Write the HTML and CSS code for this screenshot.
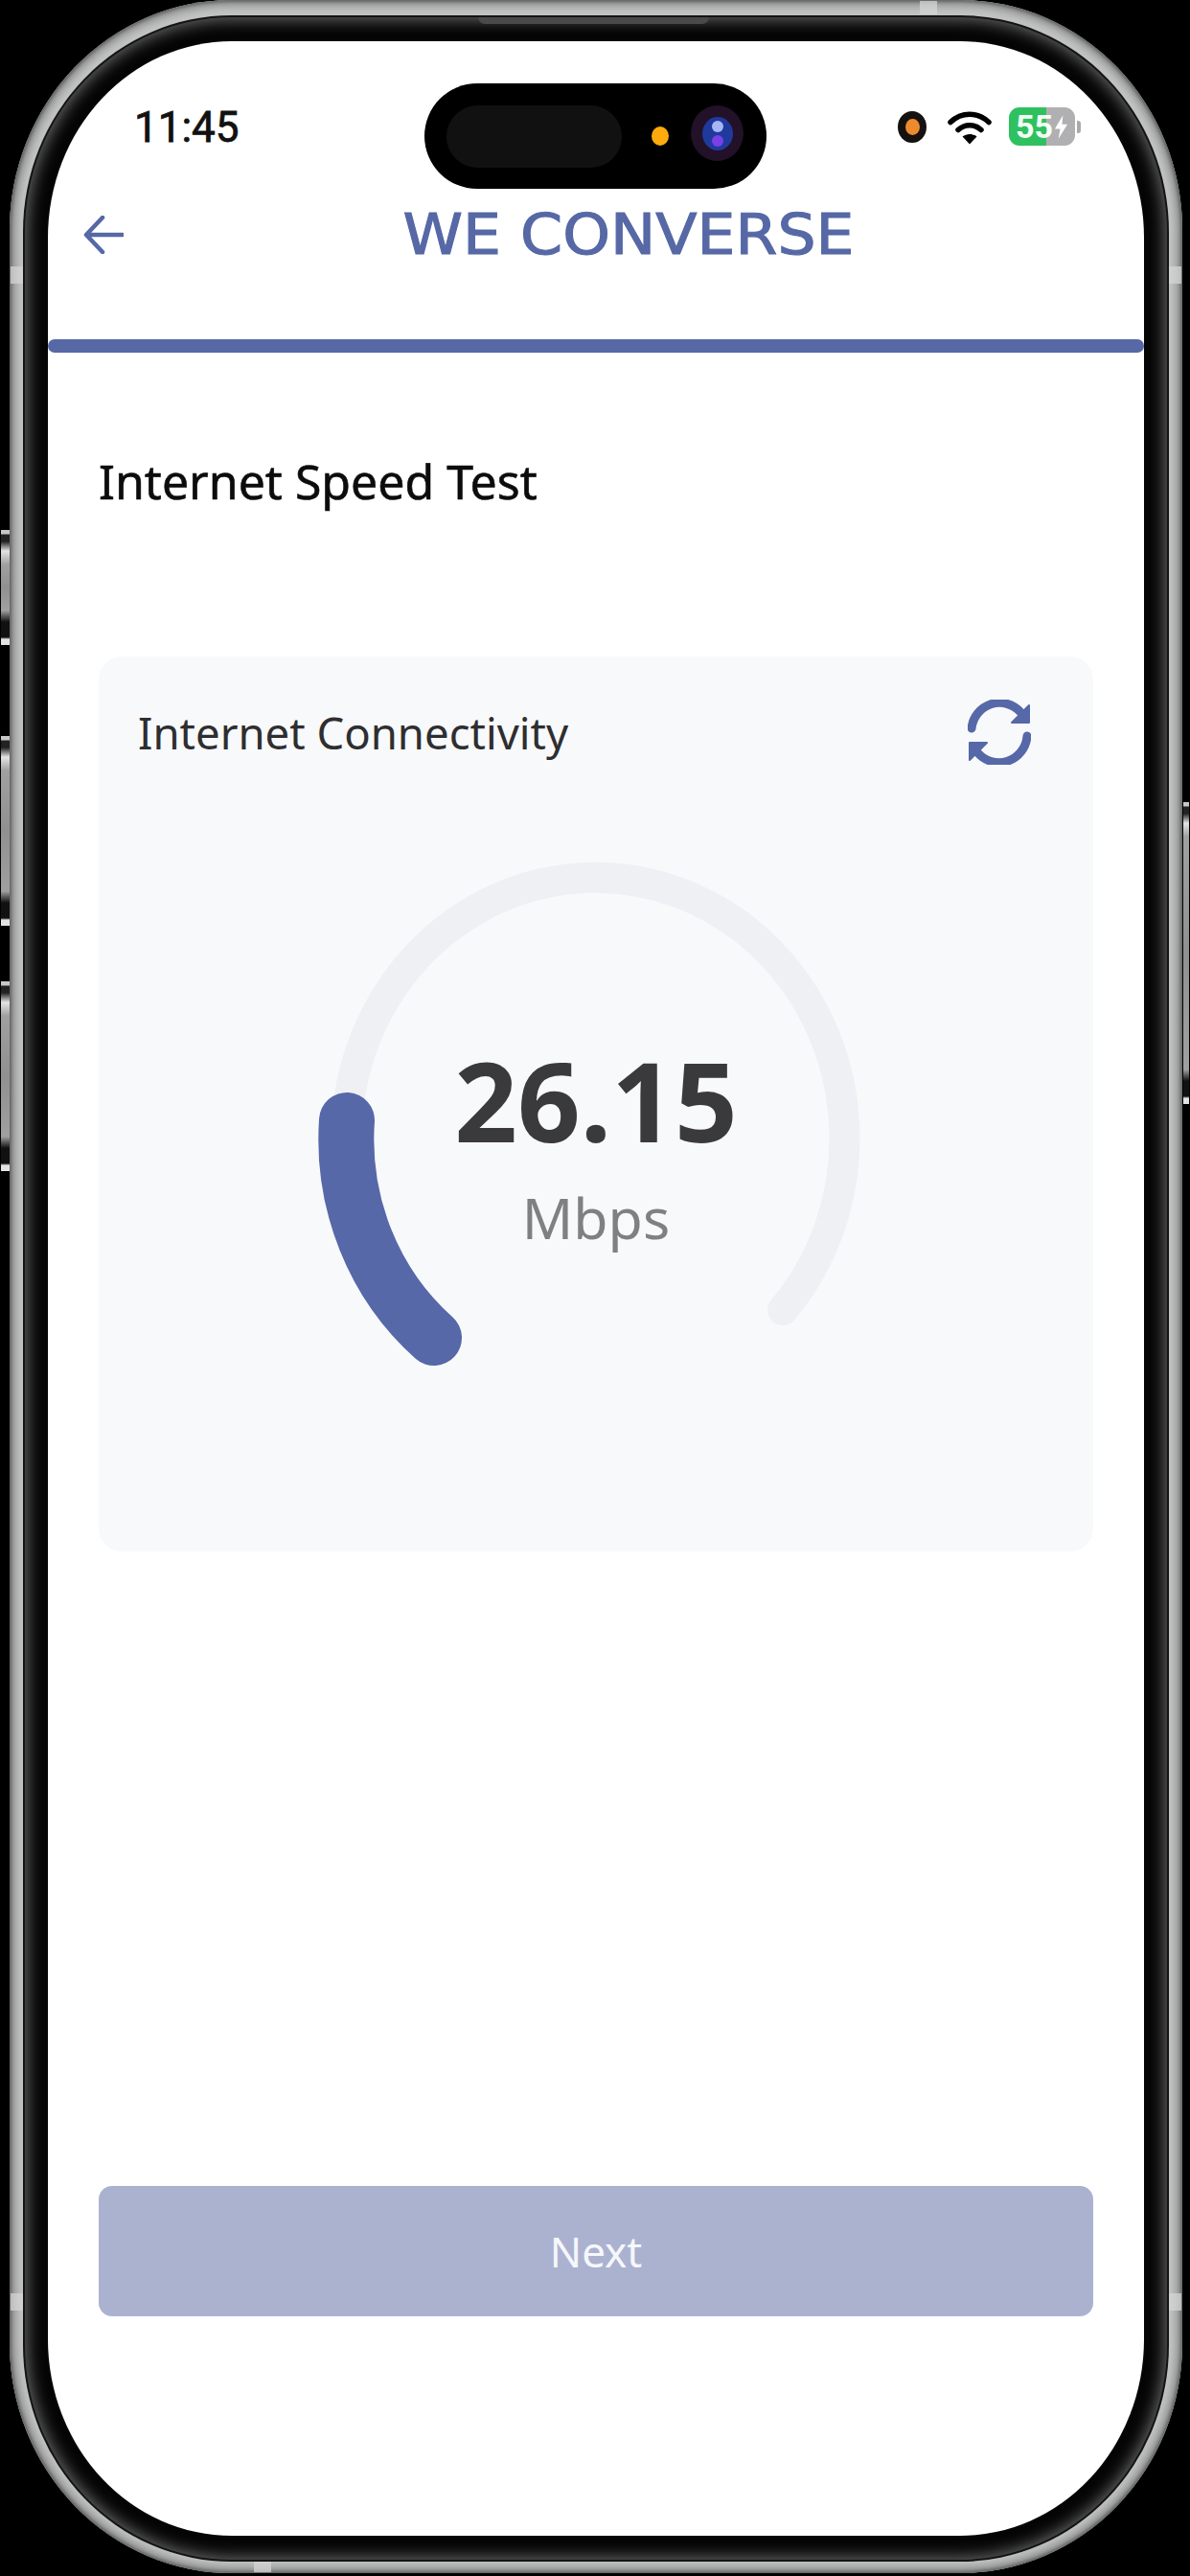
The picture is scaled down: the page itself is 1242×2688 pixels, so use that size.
FILE: index.html
```html
<!DOCTYPE html>
<html lang="en">
<head>
<meta charset="utf-8">
<title>We Converse - Internet Speed Test</title>
<link rel="stylesheet" href="styles.css">
</head>
<body>
<div class="stage">
  <span class="side-btn btn-a"></span>
  <span class="side-btn btn-b"></span>
  <span class="side-btn btn-c"></span>
  <span class="side-btn btn-d"></span>
  <div class="metal">
    <span class="band band-lt"></span>
    <span class="band band-lb"></span>
    <span class="band band-rt"></span>
    <span class="band band-rb"></span>
    <span class="band band-t"></span>
    <span class="band band-b"></span>
    <span class="slit"></span>
    <div class="hairline">
      <div class="bezel">
        <main class="screen">
          <div class="island">
            <span class="island-pill"></span>
            <span class="island-dot"></span>
            <span class="camera"><span class="lens"><span class="lens-top"></span><span class="lens-bottom"></span></span></span>
          </div>

          <div class="status">
            <span class="time">11:45</span>
            <div class="status-right">
              <span class="rec"><span class="rec-core"></span></span>
              <svg class="wifi" viewBox="0 0 46 37" aria-hidden="true">
                <path d="M3 13.500C14.500 2.500 31.500 2.500 43 13.500" fill="none" stroke="#000" stroke-width="5.500" stroke-linecap="round"/>
                <path d="M11 21.500C18 15 28 15 35 21.500" fill="none" stroke="#000" stroke-width="5.500" stroke-linecap="round"/>
                <path d="M15.500 28.500C20 25 26 25 30.500 28.500L23 36.500Z" fill="#000"/>
              </svg>
              <div class="battery">
                <span class="battery-num">55</span>
                <svg class="bolt" viewBox="0 0 16 26" aria-hidden="true"><path d="M10 0L1 15H7L5 26L15 10H9Z" fill="#fff"/></svg>
              </div>
              <span class="battery-nub"></span>
            </div>
          </div>

          <header class="nav">
            <svg class="back" viewBox="0 0 42 40" aria-hidden="true">
              <path d="M41 20H3M20 2L3 20L20 38" fill="none" stroke="#5668a5" stroke-width="4.500" stroke-linecap="round" stroke-linejoin="round"/>
            </svg>
            <span class="logo">WE CONVERSE</span>
          </header>
          <div class="rule"></div>

          <h1 class="page-title">Internet Speed Test</h1>

          <section class="card">
            <div class="card-head">
              <h2 class="card-title">Internet Connectivity</h2>
              <svg class="refresh" viewBox="0 0 66 68" aria-hidden="true">
                <path d="M4 30A29.500 30 0 0 1 55 13" fill="none" stroke="#5668a8" stroke-width="9" stroke-linecap="round"/>
                <path d="M64 6V24H46Z" fill="#5668a8" stroke="#5668a8" stroke-width="2" stroke-linejoin="round"/>
                <path d="M62 38A29.500 30 0 0 1 10 55" fill="none" stroke="#5668a8" stroke-width="9" stroke-linecap="round"/>
                <path d="M2 45H20L2 63Z" fill="#5668a8" stroke="#5668a8" stroke-width="2" stroke-linejoin="round"/>
              </svg>
            </div>
            <div class="gauge">
              <svg class="gauge-svg" viewBox="0 0 600 560" aria-hidden="true">
                <path d="M130 514A260 272 0 1 1 495 487" fill="none" stroke="#eff0f3" stroke-width="32" stroke-linecap="round"/>
                <path d="M131 516A260 272 0 0 1 40 289" fill="none" stroke="#5668a8" stroke-width="58" stroke-linecap="round"/>
              </svg>
              <div class="readout">
                <span class="speed">26.15</span>
                <span class="unit">Mbps</span>
              </div>
            </div>
          </section>

          <button class="next" type="button">Next</button>
        </main>
      </div>
    </div>
  </div>
</div>
</body>
</html>
```

FILE: styles.css
```css
* { box-sizing: border-box; }

html, body {
  margin: 0;
  padding: 0;
  background: #000;
}

.stage {
  position: relative;
  display: flex;
  width: 1242px;
  height: 2688px;
  padding: 0 8px 3px 10px;
  background: #000;
  overflow: hidden;
}

.side-btn {
  position: absolute;
  background: linear-gradient(180deg, #c8c8c8 0, #c8c8c8 4px, #222 5px, #222 12px, #e4e4e4 22px, #a0a0a0 36px, #909090 50%, #a0a0a0 calc(100% - 36px), #111 calc(100% - 24px), #111 calc(100% - 8px), #e4e4e4 calc(100% - 6px));
}
.btn-a { left: 1px; top: 553px; width: 9px; height: 120px; }
.btn-b { left: 1px; top: 768px; width: 9px; height: 198px; }
.btn-c { left: 1px; top: 1024px; width: 9px; height: 198px; }
.btn-d { left: 1235px; top: 837px; width: 6px; height: 315px; }

.metal {
  position: relative;
  flex: 1;
  display: flex;
  padding: 16px 14px 12px;
  border-radius: 232px / 240px;
  background: #c2c4c4;
  box-shadow: inset 0 0 3px 2px #666, inset 0 0 8px 6px #8a8a8a;
}

.band {
  position: absolute;
  background: #d4d4d4;
  opacity: .75;
}
.band-lt { left: 1px; top: 278px; width: 13px; height: 18px; }
.band-lb { left: 1px; top: 2393px; width: 13px; height: 18px; }
.band-rt { right: 1px; top: 278px; width: 13px; height: 18px; }
.band-rb { right: 1px; top: 2393px; width: 13px; height: 18px; }
.band-t { left: 950px; top: 1px; width: 18px; height: 14px; }
.band-b { left: 255px; top: 2673px; width: 18px; height: 11px; }

.slit {
  position: absolute;
  left: 489px;
  top: 18px;
  z-index: 1;
  width: 241px;
  height: 7px;
  border-radius: 0 0 8px 8px;
  background: #4a4a4a;
}

.hairline {
  flex: 1;
  display: flex;
  padding: 2px;
  border-radius: 218px / 226px;
  background: #141414;
}

.bezel {
  flex: 1;
  display: flex;
  padding: 25px 24px;
  border-radius: 216px / 224px;
  background: #050505;
  box-shadow: inset 0 0 16px 3px #666;
}

.screen {
  position: relative;
  flex: 1;
  display: flex;
  flex-direction: column;
  border-radius: 192px / 205px;
  background: #fff;
  overflow: hidden;
  font-family: "Noto Sans", sans-serif;
}

.island {
  position: absolute;
  left: 393px;
  top: 44px;
  display: flex;
  align-items: center;
  width: 357px;
  height: 110px;
  padding-left: 23px;
  border-radius: 55px;
  background: #000;
}
.island-pill {
  width: 183px;
  height: 65px;
  border-radius: 33px;
  background: #111;
}
.island-dot {
  width: 18px;
  height: 20px;
  margin-left: 31px;
  border-radius: 50%;
  background: #fdab0c;
}
.camera {
  display: flex;
  align-items: center;
  justify-content: center;
  width: 55px;
  height: 58px;
  margin: -6px 0 0 23px;
  border-radius: 50%;
  background: #231029;
}
.lens {
  display: flex;
  flex-direction: column;
  align-items: center;
  justify-content: space-between;
  width: 32px;
  height: 35px;
  padding: 4px 0 4px;
  border-radius: 50%;
  background: #1f3a9c;
}
.lens-top {
  width: 12px;
  height: 12px;
  border-radius: 50%;
  background: #a9b6f5;
}
.lens-bottom {
  width: 12px;
  height: 12px;
  border-radius: 50%;
  background: #7a3fe6;
}

.status {
  display: flex;
  align-items: center;
  justify-content: space-between;
  height: 150px;
  padding: 30px 66px 0 90px;
}
.time {
  font-family: Roboto, sans-serif;
  font-size: 44px;
  font-weight: 400;
  line-height: 50px;
  color: #111;
  -webkit-text-stroke: 0.8px #111;
}
.status-right {
  display: flex;
  align-items: center;
  margin-top: -2px;
}
.rec {
  display: flex;
  align-items: center;
  justify-content: center;
  width: 30px;
  height: 33px;
  border-radius: 50%;
  background: #14110f;
}
.rec-core {
  width: 15px;
  height: 17px;
  border-radius: 50%;
  background: #ee8a2e;
}
.wifi {
  width: 46px;
  height: 37px;
  margin-left: 22px;
}
.battery {
  display: flex;
  align-items: center;
  gap: 1px;
  width: 69px;
  height: 40px;
  margin-left: 18px;
  padding-left: 7px;
  border-radius: 11px;
  background: linear-gradient(90deg, #2fc160 0, #2fc160 57%, #b0b0b2 57%, #b0b0b2 100%);
}
.battery-num {
  font-family: Roboto, sans-serif;
  font-size: 34px;
  font-weight: 700;
  line-height: 40px;
  color: #f4fff6;
}
.bolt {
  width: 15px;
  height: 25px;
}
.battery-nub {
  width: 4px;
  height: 13px;
  margin-left: 2px;
  border-radius: 0 3px 3px 0;
  background: #a9a9ab;
}

.nav {
  position: relative;
  display: flex;
  align-items: center;
  justify-content: center;
  height: 104px;
  padding-left: 68px;
}
.back {
  position: absolute;
  left: 37px;
  top: 32px;
  width: 42px;
  height: 40px;
}
.logo {
  font-family: "DejaVu Sans", sans-serif;
  font-size: 58px;
  line-height: 70px;
  color: #5668a5;
  -webkit-text-stroke: 1.1px #5668a5;
  white-space: nowrap;
  transform: scaleX(1.09);
}

.rule {
  height: 14px;
  margin-top: 57px;
  border-radius: 7px;
  background: #5668a5;
}

.page-title {
  margin: 100px 0 0 53px;
  font-size: 50px;
  font-weight: 400;
  line-height: 68px;
  color: #0c0c0c;
  -webkit-text-stroke: 0.6px #0c0c0c;
}

.card {
  display: flex;
  flex-direction: column;
  height: 934px;
  margin: 149px 53px 0;
  padding: 38px 0 0;
  border-radius: 24px;
  background: #f8f9fb;
}
.card-head {
  display: flex;
  align-items: center;
  justify-content: space-between;
  height: 82px;
  padding: 0 65px 0 41px;
}
.card-title {
  margin: 0;
  font-size: 45.5px;
  font-weight: 400;
  line-height: 60px;
  color: #2e2e30;
}
.refresh {
  width: 66px;
  height: 68px;
  margin-top: -1px;
}

.gauge {
  position: relative;
  align-self: center;
  width: 600px;
  height: 560px;
  margin-top: 75px;
}
.gauge-svg {
  display: block;
  width: 600px;
  height: 560px;
}
.readout {
  position: absolute;
  left: 0;
  right: 0;
  top: 188px;
  display: flex;
  flex-direction: column;
  align-items: center;
}
.speed {
  font-size: 115px;
  font-weight: 700;
  line-height: 160px;
  color: #3a3a3c;
}
.unit {
  margin-top: 2px;
  font-size: 59px;
  line-height: 80px;
  color: #808080;
}

.next {
  flex: none;
  height: 136px;
  margin: auto 53px 229px;
  border: 0;
  border-radius: 14px;
  background: #abb2d0;
  font-family: "Noto Sans", sans-serif;
  font-size: 44px;
  color: #f6f7fb;
}
```
